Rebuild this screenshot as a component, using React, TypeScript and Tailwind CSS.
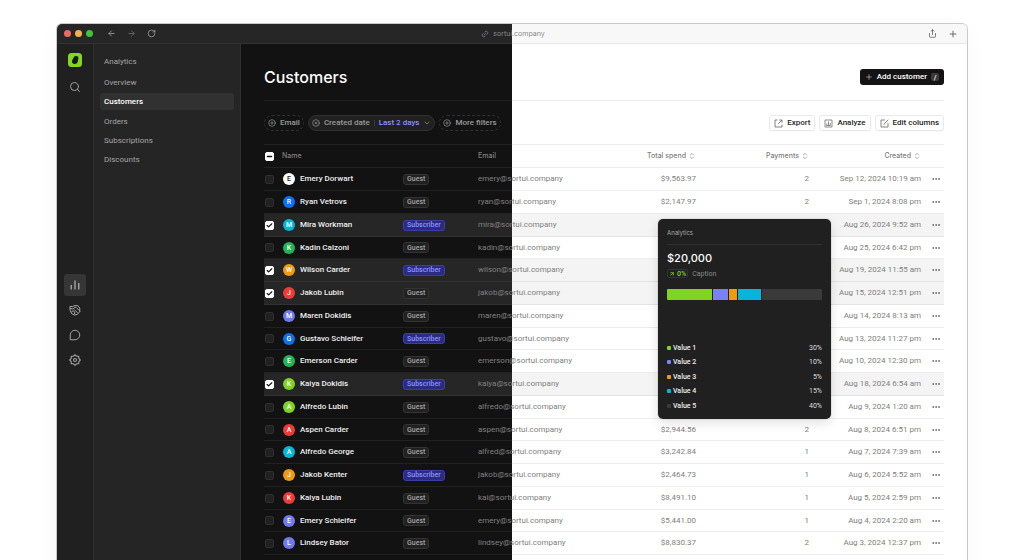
import { useState } from "react";
import type { ReactNode } from "react";
import {
  ArrowLeft,
  ArrowRight,
  ArrowUpRight,
  Check,
  ChevronDown,
  ChevronsUpDown,
  CirclePlus,
  CircleX,
  Ellipsis,
  Link2,
  Minus,
  Plus,
  RotateCw,
  Search,
  Share,
} from "lucide-react";
import clsx from "clsx";

type Customer = {
  name: string;
  color: string;
  subscriber?: boolean;
  email: string;
  spend: string;
  payments: number;
  created: string;
};

const WHITE = "bg-white text-[#222]";
const BLUE = "bg-[#0b70f6] text-white";
const CYAN = "bg-[#06b6d9] text-white";
const GREEN = "bg-[#22b455] text-white";
const ORANGE = "bg-[#f09a12] text-white";
const RED = "bg-[#ef3b36] text-white";
const INDIGO = "bg-[#7079ee] text-white";
const LIME = "bg-[#7fd321] text-white";

const customers: Customer[] = [
  { name: "Emery Dorwart", color: WHITE, email: "emery", spend: "$9,563.97", payments: 2, created: "Sep 12, 2024 10:19 am" },
  { name: "Ryan Vetrovs", color: BLUE, email: "ryan", spend: "$2,147.97", payments: 2, created: "Sep 1, 2024 8:08 pm" },
  { name: "Mira Workman", color: CYAN, subscriber: true, email: "mira", spend: "$1,820.40", payments: 1, created: "Aug 26, 2024 9:52 am" },
  { name: "Kadin Calzoni", color: GREEN, email: "kadin", spend: "$4,310.12", payments: 1, created: "Aug 25, 2024 6:42 pm" },
  { name: "Wilson Carder", color: ORANGE, subscriber: true, email: "wilson", spend: "$6,204.80", payments: 2, created: "Aug 19, 2024 11:55 am" },
  { name: "Jakob Lubin", color: RED, email: "jakob", spend: "$3,118.25", payments: 1, created: "Aug 15, 2024 12:51 pm" },
  { name: "Maren Dokidis", color: INDIGO, email: "maren", spend: "$7,492.00", payments: 1, created: "Aug 14, 2024 8:13 am" },
  { name: "Gustavo Schleifer", color: BLUE, subscriber: true, email: "gustavo", spend: "$5,037.64", payments: 2, created: "Aug 13, 2024 11:27 pm" },
  { name: "Emerson Carder", color: GREEN, email: "emerson", spend: "$2,660.18", payments: 1, created: "Aug 10, 2024 12:30 pm" },
  { name: "Kaiya Dokidis", color: LIME, subscriber: true, email: "kaiya", spend: "$8,015.33", payments: 2, created: "Aug 18, 2024 6:54 am" },
  { name: "Alfredo Lubin", color: LIME, email: "alfredo", spend: "$4,926.70", payments: 1, created: "Aug 9, 2024 1:20 am" },
  { name: "Aspen Carder", color: RED, email: "aspen", spend: "$2,944.56", payments: 2, created: "Aug 8, 2024 6:51 pm" },
  { name: "Alfredo George", color: CYAN, email: "alfred", spend: "$3,242.84", payments: 1, created: "Aug 7, 2024 7:39 am" },
  { name: "Jakob Kenter", color: ORANGE, subscriber: true, email: "jakob", spend: "$2,464.73", payments: 1, created: "Aug 6, 2024 5:52 am" },
  { name: "Kaiya Lubin", color: RED, email: "kai", spend: "$8,491.10", payments: 1, created: "Aug 5, 2024 2:59 pm" },
  { name: "Emery Schleifer", color: INDIGO, email: "emery", spend: "$5,441.00", payments: 1, created: "Aug 4, 2024 2:20 am" },
  { name: "Lindsey Bator", color: INDIGO, email: "lindsey", spend: "$8,830.37", payments: 2, created: "Aug 3, 2024 12:37 pm" },
  { name: "Maren Workman", color: GREEN, email: "maren", spend: "$1,204.50", payments: 1, created: "Aug 2, 2024 9:14 am" },
];

const values = [
  { label: "Value 1", share: 30, color: "bg-[#7fd321]" },
  { label: "Value 2", share: 10, color: "bg-[#7882f2]" },
  { label: "Value 3", share: 5, color: "bg-[#f09a12]" },
  { label: "Value 4", share: 15, color: "bg-[#06b6d9]" },
  { label: "Value 5", share: 40, color: "bg-[#3a3a3a]" },
];

function Logo() {
  return (
    <svg viewBox="0 0 28 28" className="size-3.5" aria-hidden="true">
      <rect width="28" height="28" rx="7" fill="#84d61f" />
      <path d="M15.5 6.2c3-.7 5.4 1 5.3 4.2-.1 2.200-.6 3.200-.9 5.600-.5 3.600-3.200 6-6.800 5.900-3.700-.1-5.700-2.500-5-5.900.5-2.300 1.500-3.300 2.400-5.400 1-2.300 2.400-3.800 5-4.400Z" fill="#141b0b" />
    </svg>
  );
}

function BarsIcon() {
  return (
    <svg viewBox="0 0 20 20" className="size-2.5" fill="none" stroke="currentColor" strokeWidth="2.800" aria-hidden="true">
      <path d="M2.500 10v9M10 1v18M17.500 6v13" />
    </svg>
  );
}

function HandsIcon() {
  return (
    <svg viewBox="0 0 24 24" className="size-3" fill="none" stroke="currentColor" strokeWidth="2" strokeLinecap="round" strokeLinejoin="round" aria-hidden="true">
      <path d="M2.500 5h5L12 3l6 .5L21.500 8v8L16 21l-5 1-6-3-2.500-6Z" />
      <path d="M3 9l5 1 3.500-3.500 3 .5 7 7M5 16l3-2.500 3.500 2.500-.5 4M11 11.500l6 6" />
    </svg>
  );
}

function ChatIcon() {
  return (
    <svg viewBox="0 0 24 24" className="size-3" fill="none" stroke="currentColor" strokeWidth="2" strokeLinejoin="round" aria-hidden="true">
      <path d="M12 2.500a9.500 9.500 0 1 1 0 19H2.500V12A9.500 9.500 0 0 1 12 2.500Z" />
    </svg>
  );
}

function GearIcon() {
  return (
    <svg viewBox="0 0 24 24" className="size-3" fill="none" stroke="currentColor" strokeWidth="2.200" strokeLinejoin="round" aria-hidden="true">
      <path d="M12 1.500l3.100 2.900 4.300.2.200 4.300 2.900 3.100-2.900 3.100-.2 4.300-4.300.2L12 22.500l-3.100-2.900-4.300-.2-.2-4.300L1.500 12l2.900-3.100.2-4.300 4.300-.2Z" />
      <circle cx="12" cy="12" r="3" />
    </svg>
  );
}

function ExportIcon() {
  return (
    <svg viewBox="0 0 18 18" className="size-[9px]" fill="none" stroke="currentColor" strokeWidth="1.600" aria-hidden="true">
      <path d="M7 2H2v14h14v-5M10.500 2H16v5.500M16 2 8.500 9.500" />
    </svg>
  );
}

function AnalyzeIcon() {
  return (
    <svg viewBox="0 0 18 18" className="size-[9px]" fill="none" stroke="currentColor" strokeWidth="1.500" aria-hidden="true">
      <path d="M2 2h14v14H2zM5.500 9v4M9 5v8M12.500 8v5M5 13h8" />
    </svg>
  );
}

function EditIcon() {
  return (
    <svg viewBox="0 0 18 18" className="size-[9px]" fill="none" stroke="currentColor" strokeWidth="1.600" aria-hidden="true">
      <path d="M10 2H2v14h14V8M16.500 1.500 8 10v1.500" />
    </svg>
  );
}

function CheckBox({ label, checked, mixed, onChange }: { label: string; checked: boolean; mixed?: boolean; onChange: () => void }) {
  const on = checked || mixed;
  return (
    <span className="grid size-[9px] place-items-center">
      <input
        type="checkbox"
        aria-label={label}
        checked={checked}
        onChange={onChange}
        className={clsx(
          "col-start-1 row-start-1 size-[9px] appearance-none rounded-[2px] border",
          on ? "border-white bg-white" : "border-[#303030] bg-[#212121]",
        )}
      />
      {mixed && <Minus className="pointer-events-none col-start-1 row-start-1 size-[7px] text-[#111]" strokeWidth={5} />}
      {checked && !mixed && <Check className="pointer-events-none col-start-1 row-start-1 size-[7px] text-[#111]" strokeWidth={4} />}
    </span>
  );
}

function LightButton({ icon, children }: { icon: ReactNode; children: ReactNode }) {
  return (
    <button type="button" className="flex h-4 items-center gap-1 rounded-[3px] border border-[#e9e9e9] bg-white px-1 font-medium text-[#262626] shadow-[0_1px_1px_rgba(0,0,0,0.03)]">
      <span className="text-[#666]">{icon}</span>
      {children}
    </button>
  );
}

function TitleBar() {
  return (
    <header className="flex h-5 items-center border-b border-[rgba(128,128,128,0.12)] bg-[linear-gradient(to_right,#262626_50%,#f8f8f8_50%)] bg-fixed pr-[9px] pl-[7px] text-[#8a8a8a]">
      <div className="flex flex-1 items-center">
        <div className="flex gap-1">
          <span className="size-[7px] rounded-full bg-[#ee6a5f]" />
          <span className="size-[7px] rounded-full bg-[#f5b04c]" />
          <span className="size-[7px] rounded-full bg-[#3fc43a]" />
        </div>
        <div className="ml-3.5 flex gap-[11px]">
          <button type="button" aria-label="Back"><ArrowLeft className="size-[9px] text-[#aaa]" /></button>
          <button type="button" aria-label="Forward"><ArrowRight className="size-[9px] text-[#777]" /></button>
          <button type="button" aria-label="Reload"><RotateCw className="size-[9px] text-[#aaa]" /></button>
        </div>
      </div>
      <div className="flex items-center gap-1 pl-1">
        <Link2 className="size-2 -rotate-45" />
        <span>sortui.company</span>
      </div>
      <div className="flex flex-1 items-center justify-end gap-[11px]">
        <button type="button" aria-label="Share"><Share className="size-[9px] text-[#555]" /></button>
        <button type="button" aria-label="New tab"><Plus className="size-2.5 text-[#555]" /></button>
      </div>
    </header>
  );
}

function Rail() {
  const item = "grid size-[22px] place-items-center rounded-[3px] text-[#a3a3a3]";
  return (
    <nav aria-label="Sections" className="flex w-[37px] shrink-0 flex-col items-center border-r border-[#2f2f2f] bg-[#202020] pt-[9px]">
      <a href="#home" aria-label="Home"><Logo /></a>
      <button type="button" aria-label="Search" className={clsx(item, "mt-[9px]")}><Search className="size-3" /></button>
      <div className="mt-44 flex flex-col gap-[3px]">
        <a href="#analytics" aria-label="Analytics" className={clsx(item, "bg-[#363636]")}><BarsIcon /></a>
        <a href="#partners" aria-label="Partners" className={item}><HandsIcon /></a>
        <a href="#messages" aria-label="Messages" className={item}><ChatIcon /></a>
        <a href="#settings" aria-label="Settings" className={item}><GearIcon /></a>
      </div>
    </nav>
  );
}

function SideNav() {
  return (
    <aside className="w-[147px] shrink-0 border-r border-[#303030] bg-[#252525] px-1.5 pt-[9px] font-['Roboto',sans-serif] text-[8px] text-[#a5a5a5]">
      <h2 className="flex h-[17px] items-center px-1 pt-px">Analytics</h2>
      <ul className="mt-1 flex h-[94px] flex-col justify-between">
        {["Overview", "Customers", "Orders", "Subscriptions", "Discounts"].map((label) => (
          <li key={label}>
            <a
              href={"#" + label.toLowerCase()}
              className={clsx(
                "flex h-[17px] items-center rounded-[3px] px-1 pt-px",
                label === "Customers" && "bg-[#313131] font-medium text-white",
              )}
            >
              {label}
            </a>
          </li>
        ))}
      </ul>
    </aside>
  );
}

function AnalyticsCard() {
  return (
    <section aria-label="Analytics summary" className="absolute top-[175px] right-[136px] flex h-[200px] w-[173px] flex-col rounded-[5px] bg-[#202020] px-[9px] pb-[9px] text-white shadow-[0_0_0_1px_rgba(0,0,0,0.06),0_4px_12px_rgba(0,0,0,0.12)]">
      <h2 className="flex h-[26px] items-center border-b border-[#303030] pt-0.5 text-[6px] text-[#a8a8a8]">Analytics</h2>
      <p className="mt-1.5 text-[11px] leading-[14px] font-medium">$20,000</p>
      <div className="mt-1 flex h-[9px] items-center gap-1 font-['Roboto',sans-serif] text-[7px]">
        <span className="flex h-[9px] items-center gap-0.5 rounded-[2px] border border-[#333] px-px font-medium text-[#84d61f]">
          <ArrowUpRight className="size-1.5" strokeWidth={3} />
          0%
        </span>
        <span className="text-[#888]">Caption</span>
      </div>
      <div className="mt-[11px] flex h-[11px] gap-px overflow-hidden rounded-[1px]">
        {values.map((v) => (
          <span key={v.label} className={v.color} style={{ flexGrow: v.share, flexBasis: 0 }} />
        ))}
      </div>
      <ul className="mt-auto flex h-[67px] flex-col justify-between font-['Roboto',sans-serif] text-[7px]">
        {values.map((v) => (
          <li key={v.label} className="flex h-[9px] items-center">
            <span className={clsx("mr-0.5 size-1 rounded-[1px]", v.color)} />
            <span className="font-medium text-[#eee]">{v.label}</span>
            <span className="ml-auto text-[#ddd]">{v.share}%</span>
          </li>
        ))}
      </ul>
    </section>
  );
}

function SortHeader({ children }: { children: ReactNode }) {
  return (
    <th scope="col" className="p-0 font-medium">
      <button type="button" className="ml-auto flex items-center gap-0.5">
        {children}
        <ChevronsUpDown className="size-2" />
      </button>
    </th>
  );
}

function CustomerTable() {
  const [selected, setSelected] = useState<number[]>([2, 4, 5, 9]);
  const toggle = (i: number) => setSelected((s) => (s.includes(i) ? s.filter((n) => n !== i) : [...s, i]));
  const all = selected.length === customers.length;
  const toggleAll = () => setSelected(all ? [] : customers.map((_, i) => i));
  const line = "border-[rgba(128,128,128,0.14)]";

  return (
    <table className={clsx("mt-[13px] w-full table-fixed border-t text-left whitespace-nowrap text-[#808080]", line)}>
      <colgroup>
        <col className="w-[18px]" />
        <col className="w-[121px]" />
        <col className="w-[75px]" />
        <col />
        <col className="w-[100px]" />
        <col className="w-[113px]" />
        <col className="w-28" />
        <col className="w-[23px]" />
      </colgroup>
      <thead>
        <tr className={clsx("h-[23px] border-b", line)}>
          <th scope="col" className="p-0 pl-px"><CheckBox label="Select all customers" checked={all} mixed={selected.length > 0 && !all} onChange={toggleAll} /></th>
          <th scope="col" className="p-0 font-medium">Name</th>
          <th scope="col" className="p-0" aria-label="Plan" />
          <th scope="col" className="p-0 font-medium">Email</th>
          <SortHeader>Total spend</SortHeader>
          <SortHeader>Payments</SortHeader>
          <SortHeader>Created</SortHeader>
          <th scope="col" className="p-0" aria-label="Actions" />
        </tr>
      </thead>
      <tbody className="font-['Roboto',sans-serif] text-[8px]">
        {customers.map((c, i) => (
          <tr
            key={c.name}
            className={clsx(
              "h-[23px] border-b nth-[4n]:h-[22px]",
              line,
              selected.includes(i) && "bg-[linear-gradient(to_right,#262626_50%,#f4f4f4_50%)] bg-fixed",
            )}
          >
            <td className="p-0 pl-px"><CheckBox label={"Select " + c.name} checked={selected.includes(i)} onChange={() => toggle(i)} /></td>
            <td className="p-0 pl-px">
              <span className="flex items-center gap-[5px] font-medium text-[#eee]">
                <span className={clsx("grid size-3 place-items-center rounded-full text-[7px]", c.color)}>{c.name[0]}</span>
                {c.name}
              </span>
            </td>
            <td className="p-0">
              <span
                className={clsx(
                  "inline-flex h-[11px] items-center rounded-[3px] border px-[3px] align-middle text-[7px] font-medium",
                  c.subscriber ? "border-[#3d3da6] bg-[#2b2b80] text-[#8b93ff]" : "border-[#343434] bg-[#212121] text-[#a3a3a3]",
                )}
              >
                {c.subscriber ? "Subscriber" : "Guest"}
              </span>
            </td>
            <td className="p-0">{c.email}@sortui.company</td>
            <td className="p-0 text-right">{c.spend}</td>
            <td className="p-0 text-right">{c.payments}</td>
            <td className="p-0 text-right">{c.created}</td>
            <td className="p-0">
              <button type="button" aria-label={"Actions for " + c.name} className="ml-auto mr-[3px] block text-[#555]">
                <Ellipsis className="size-2.5" />
              </button>
            </td>
          </tr>
        ))}
      </tbody>
    </table>
  );
}

export default function App() {
  return (
    <div className="flex h-screen overflow-hidden bg-white px-[57px] pt-6 font-['Inter',sans-serif] text-[7px] leading-[10px]">
      <div className="flex h-max min-h-full min-w-0 flex-1 flex-col overflow-hidden rounded-t-[5px] shadow-[0_0_0_1px_rgba(0,0,0,0.2),0_8px_28px_rgba(0,0,0,0.03)]">
        <TitleBar />
        <div className="flex flex-1">
          <Rail />
          <SideNav />
          <main className="relative min-w-0 flex-1 bg-[linear-gradient(to_right,#121212_50%,#ffffff_50%)] bg-fixed px-[23px] pt-[25px]">
            <div className="flex h-8 items-start justify-between border-b border-[rgba(128,128,128,0.14)]">
              <h1 className="text-[16px] leading-4 font-medium text-white">Customers</h1>
              <button type="button" className="flex h-4 items-center gap-1 rounded-[3px] bg-[#141414] px-[5px] font-['Roboto',sans-serif] text-[8px] font-medium text-white">
                <Plus className="size-2 text-[#bbb]" />
                Add customer
                <kbd className="grid size-2 place-items-center rounded-[2px] bg-[#3a3a3a] font-['Roboto',sans-serif] text-[7px]">/</kbd>
              </button>
            </div>
            <div className="mt-3.5 flex justify-between font-['Roboto',sans-serif] text-[8px]">
              <div className="flex gap-1 text-[#9a9a9a]">
                <button type="button" className="flex h-4 items-center gap-1 rounded-full border border-dashed border-[#303030] px-[3px] font-medium">
                  <CirclePlus className="size-2" />
                  Email
                </button>
                <button type="button" className="flex h-4 items-center gap-1 rounded-full border border-[#303030] bg-[#212121] px-[3px] font-medium">
                  <CircleX className="size-2" />
                  Created date
                  <span className="h-1.5 w-px bg-[#3a3a3a]" />
                  <span className="text-[#8b93ff]">Last 2 days</span>
                  <ChevronDown className="size-2" />
                </button>
                <button type="button" className="flex h-4 items-center gap-1 rounded-full border border-dashed border-[#303030] px-[3px] font-medium">
                  <CirclePlus className="size-2" />
                  More filters
                </button>
              </div>
              <div className="flex gap-1">
                <LightButton icon={<ExportIcon />}>Export</LightButton>
                <LightButton icon={<AnalyzeIcon />}>Analyze</LightButton>
                <LightButton icon={<EditIcon />}>Edit columns</LightButton>
              </div>
            </div>
            <CustomerTable />
            <AnalyticsCard />
          </main>
        </div>
      </div>
    </div>
  );
}
